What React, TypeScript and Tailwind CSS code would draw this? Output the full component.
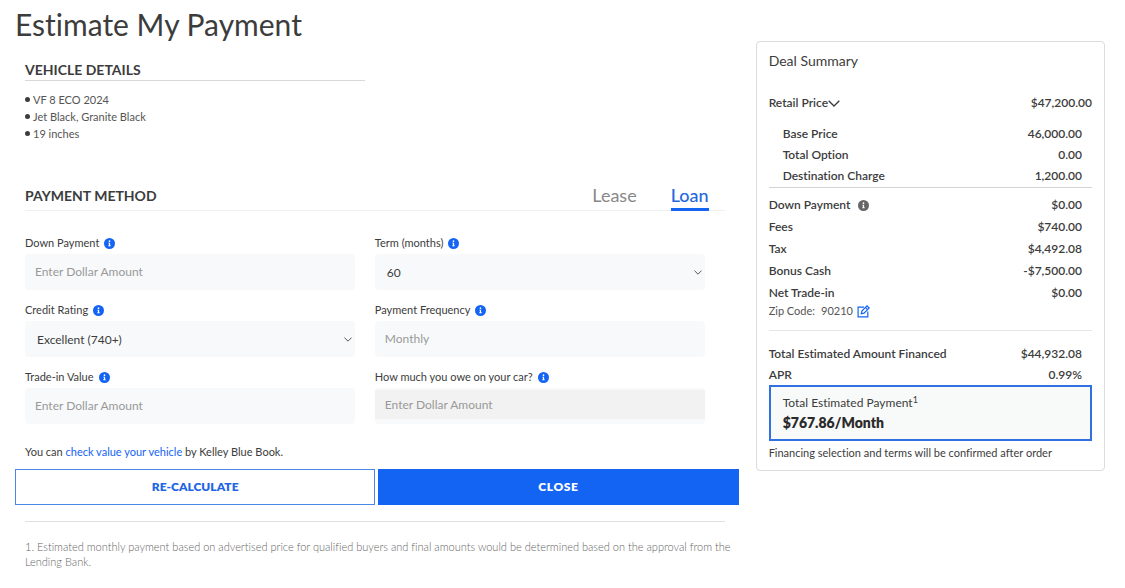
import React from 'react';

const InfoIcon: React.FC<{ className: string }> = ({ className }) => (
    <svg className={className} viewBox="0 0 22 22" aria-hidden="true">
        <circle cx="11" cy="11" r="11" fill="currentColor" />
        <circle cx="11" cy="6.3" r="1.7" fill="#fff" />
        <path d="M8.8 9.3h3.4v5.2h1.2v1.8H8.6v-1.8h1.2v-3.4h-1z" fill="#fff" />
    </svg>
);

const Chevron: React.FC<{ className: string }> = ({ className }) => (
    <svg className={className} viewBox="0 0 12 7" fill="none" stroke="currentColor" strokeWidth="1.3" aria-hidden="true">
        <path d="M0.7 0.7L6 6l5.3-5.3" />
    </svg>
);

const EditIcon: React.FC = () => (
    <svg className="size-[13px] text-[#1464f4]" viewBox="0 0 24 24" fill="none" stroke="currentColor" strokeWidth="2.2" aria-hidden="true">
        <path d="M13 4H2v18h18V12" />
        <path d="M8 16l1-5L18.5 1.5l4 4L13 15z" />
        <path d="M15.5 4.5l4 4" />
    </svg>
);

interface FieldProps {
    id: string;
    label: string;
    children: React.ReactNode;
}

const Field: React.FC<FieldProps> = ({ id, label, children }) => (
    <div>
        <div className="flex items-center gap-[5px] mb-[3px]">
            <label htmlFor={id} className="text-[11px] leading-4">{label}</label>
            <InfoIcon className="size-[11px] text-[#1464f4]" />
        </div>
        {children}
    </div>
);

const inputClass = 'block w-full h-9 px-[10px] pb-[2px] rounded-sm bg-[#f8f9fb] text-[12px] placeholder:text-[#999] outline-none';
const selectClass = 'block w-full h-9 px-3 pt-[2px] rounded-sm bg-[#f8f9fb] text-[12px] text-[#3c3c3c] appearance-none outline-none';

interface SelectProps {
    id: string;
    options: string[];
}

const Select: React.FC<SelectProps> = ({ id, options }) => (
    <div className="relative">
        <select id={id} className={selectClass}>
            {options.map((option) => (
                <option key={option}>{option}</option>
            ))}
        </select>
        <Chevron className="absolute right-[3px] top-4 w-2 h-[5px] pointer-events-none" />
    </div>
);

const breakdown = [
    { label: 'Base Price', value: '46,000.00' },
    { label: 'Total Option', value: '0.00' },
    { label: 'Destination Charge', value: '1,200.00' },
];

const adjustments = [
    { label: 'Down Payment', value: '$0.00', info: true },
    { label: 'Fees', value: '$740.00' },
    { label: 'Tax', value: '$4,492.08' },
    { label: 'Bonus Cash', value: '-$7,500.00' },
    { label: 'Net Trade-in', value: '$0.00' },
];

const totals = [
    { label: 'Total Estimated Amount Financed', value: '$44,932.08' },
    { label: 'APR', value: '0.99%' },
];

const DealSummary: React.FC = () => (
    <aside className="mt-[41px] self-start rounded border border-[#dcdcdc] px-3 pt-[9px] pb-[9px]">
        <h2 className="text-[14px] leading-5">Deal Summary</h2>
        <div className="mt-[22px] flex justify-between text-[12px] leading-5 font-semibold">
            <button type="button" className="flex items-center">
                Retail Price
                <Chevron className="w-3 h-[7px]" />
            </button>
            <span>$47,200.00</span>
        </div>
        <dl className="mt-[10px] pb-px pl-[14px] pr-[10px] text-[12px] leading-[21px] font-semibold">
            {breakdown.map((row) => (
                <div key={row.label} className="flex justify-between">
                    <dt>{row.label}</dt>
                    <dd>{row.value}</dd>
                </div>
            ))}
        </dl>
        <hr className="border-[#d4d4d4]" />
        <dl className="mt-[6px] pr-[10px] text-[12px] leading-[22px] font-semibold">
            {adjustments.map((row) => (
                <div key={row.label} className="flex justify-between">
                    <dt className="flex items-center gap-2">
                        {row.label}
                        {row.info && <InfoIcon className="size-[11px] text-[#666]" />}
                    </dt>
                    <dd>{row.value}</dd>
                </div>
            ))}
        </dl>
        <div className="flex items-center text-[11px] leading-[14px] text-[#555]">
            <span>Zip Code:</span>
            <span className="ml-[6px] mr-1">90210</span>
            <button type="button" aria-label="Edit zip code"><EditIcon /></button>
        </div>
        <hr className="mt-3 border-[#e4e8e8]" />
        <dl className="mt-3 pr-[10px] text-[12px] leading-[21px] font-semibold">
            {totals.map((row) => (
                <div key={row.label} className="flex justify-between">
                    <dt>{row.label}</dt>
                    <dd>{row.value}</dd>
                </div>
            ))}
        </dl>
        <div className="border-2 border-[#3070e0] bg-[#f8faf9] px-3 py-[6px]">
            <p className="text-[12px] leading-5">
                Total Estimated Payment<sup className="text-[9px]">1</sup>
            </p>
            <p className="text-[14px] leading-5 font-extrabold text-[#2b2b2b]">$767.86/Month</p>
        </div>
        <p className="mt-1 text-[11px] leading-4">Financing selection and terms will be confirmed after order</p>
    </aside>
);

const App: React.FC = () => {
    return (
        <main className="grid grid-cols-[29fr_14fr] gap-x-[17px] pl-[15px] pr-5 bg-white font-['Lato','Noto_Sans',sans-serif] [font-variant-ligatures:none] text-[#3c3c3c]">
            <div>
                <h1 className="mt-1 text-[30px] leading-10">Estimate My Payment</h1>

                <section className="mt-4 pl-[10px] pr-[14px]">
                    <h2 className="max-w-[340px] border-b border-[#d8d8d8] text-[14px] leading-5 font-bold">VEHICLE DETAILS</h2>
                    <ul className="mt-[10px] text-[11px] leading-[17px] text-[#555]">
                        {['VF 8 ECO 2024', 'Jet Black, Granite Black', '19 inches'].map((item) => (
                            <li key={item} className="flex items-center gap-[3px]">
                                <span className="size-[5px] rounded-full bg-[#3c3c3c]" />
                                {item}
                            </li>
                        ))}
                    </ul>
                </section>

                <section className="mt-10 pl-[10px] pr-[14px]">
                    <div className="flex items-start justify-between border-b border-[#f0f0f0] pr-4">
                        <h2 className="text-[14px] leading-7 font-bold">PAYMENT METHOD</h2>
                        <div className="flex gap-[34px] text-[18px] leading-[26px]">
                            <button type="button" className="-mb-px border-b-3 border-transparent text-[#888]">Lease</button>
                            <button type="button" className="-mb-px border-b-3 border-[#1464f4] text-[#2468e0] font-medium">Loan</button>
                        </div>
                    </div>

                    <form className="mt-6 pr-5 grid grid-cols-2 gap-x-5 gap-y-3">
                        <Field id="down" label="Down Payment">
                            <input id="down" className={inputClass} placeholder="Enter Dollar Amount" />
                        </Field>
                        <Field id="term" label="Term (months)">
                            <Select id="term" options={['60', '72']} />
                        </Field>
                        <Field id="credit" label="Credit Rating">
                            <Select id="credit" options={['Excellent (740+)', 'Good (680-739)']} />
                        </Field>
                        <Field id="frequency" label="Payment Frequency">
                            <input id="frequency" className={inputClass} placeholder="Monthly" />
                        </Field>
                        <Field id="trade" label="Trade-in Value">
                            <input id="trade" className={inputClass} placeholder="Enter Dollar Amount" />
                        </Field>
                        <Field id="owed" label="How much you owe on your car?">
                            <div className="rounded-sm bg-[#f8f9fb] pt-[2px] pb-[5px]">
                                <input
                                    id="owed"
                                    className="block w-full h-[29px] px-[10px] bg-[#f2f2f2] text-[12px] placeholder:text-[#999]"
                                    placeholder="Enter Dollar Amount"
                                    disabled
                                />
                            </div>
                        </Field>
                    </form>

                    <p className="mt-[19px] text-[11px] leading-[18px]">
                        You can <a href="#" className="text-[#1464f4]">check value your vehicle</a> by Kelley Blue Book.
                    </p>
                </section>

                <div className="mt-2 grid grid-cols-2 gap-[3px] text-[12px] font-extrabold">
                    <button type="button" className="h-9 border border-[#4a88e8] text-[#1f66e5]">RE-CALCULATE</button>
                    <button type="button" className="h-9 bg-[#1464f4] text-white tracking-wider">CLOSE</button>
                </div>

                <footer className="mt-4 pl-[10px]">
                    <hr className="mr-[14px] border-[#e0e0e0]" />
                    <p className="mt-[17px] text-[11px] leading-[15px] font-light text-[#666]">
                        1. Estimated monthly payment based on advertised price for qualified buyers and final amounts would be determined based on the approval from the Lending Bank.
                    </p>
                </footer>
            </div>

            <DealSummary />
        </main>
    );
};

export default App;
